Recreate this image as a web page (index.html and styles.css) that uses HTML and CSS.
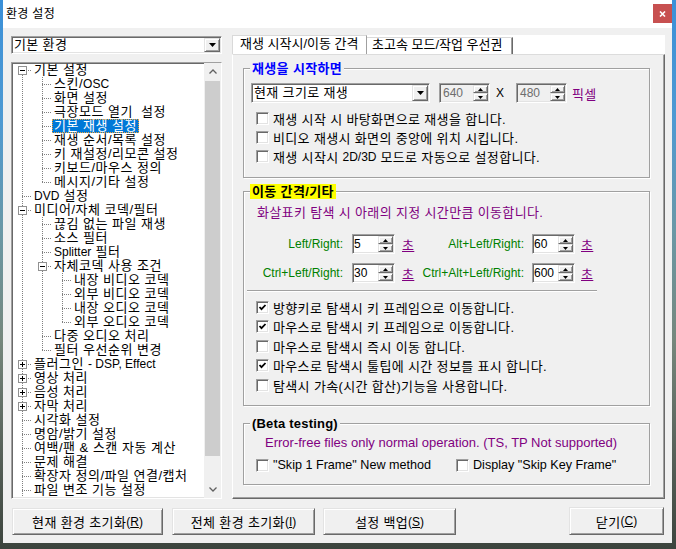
FILE: index.html
```html
<!DOCTYPE html>
<html lang="ko">
<head>
<meta charset="utf-8">
<title>환경 설정</title>
<link rel="stylesheet" href="styles.css">
</head>
<body>
<div class="window">
  <div class="titlebar">
    <span class="title">환경 설정</span>
    <span class="close"><svg width="7" height="6" viewBox="0 0 7 6"><path d="M1 0.5 L6 5.5 M6 0.5 L1 5.5" stroke="#fff" stroke-width="1.6" fill="none"/></svg></span>
  </div>
  <div class="client">
    <div class="main">
      <div class="left">
        <div class="combo combo-top">
          <span class="combo-text">기본 환경</span>
          <span class="drop raised"><svg width="7" height="4" viewBox="0 0 7 4"><polygon points="0,0 7,0 3.5,4" fill="#000"/></svg></span>
        </div>
        <div class="tree">
          <div class="tree-list">
            <div class="row"><span class="c fb"><i class="box minus"></i></span><span class="lbl">기본 설정</span></div>
            <div class="row"><span class="c v"></span><span class="c t"></span><span class="lbl">스킨/<span class="en">OSC</span></span></div>
            <div class="row"><span class="c v"></span><span class="c t"></span><span class="lbl">화면 설정</span></div>
            <div class="row"><span class="c v"></span><span class="c t"></span><span class="lbl">극장모드 열기  설정</span></div>
            <div class="row"><span class="c v"></span><span class="c t"></span><span class="lbl sel">기본 재생 설정</span></div>
            <div class="row"><span class="c v"></span><span class="c t"></span><span class="lbl">재생 순서/목록 설정</span></div>
            <div class="row"><span class="c v"></span><span class="c t"></span><span class="lbl">키 재설정/리모콘 설정</span></div>
            <div class="row"><span class="c v"></span><span class="c t"></span><span class="lbl">키보드/마우스 정의</span></div>
            <div class="row"><span class="c v"></span><span class="c l"></span><span class="lbl">메시지/기타 설정</span></div>
            <div class="row"><span class="c t"></span><span class="lbl"><span class="en">DVD</span> 설정</span></div>
            <div class="row"><span class="c t"><i class="box minus"></i></span><span class="lbl">미디어/자체 코덱/필터</span></div>
            <div class="row"><span class="c v"></span><span class="c t"></span><span class="lbl">끊김 없는 파일 재생</span></div>
            <div class="row"><span class="c v"></span><span class="c t"></span><span class="lbl">소스 필터</span></div>
            <div class="row"><span class="c v"></span><span class="c t"></span><span class="lbl"><span class="en">Splitter</span> 필터</span></div>
            <div class="row"><span class="c v"></span><span class="c t"><i class="box minus"></i></span><span class="lbl">자체코덱 사용 조건</span></div>
            <div class="row"><span class="c v"></span><span class="c v"></span><span class="c t"></span><span class="lbl">내장 비디오 코덱</span></div>
            <div class="row"><span class="c v"></span><span class="c v"></span><span class="c t"></span><span class="lbl">외부 비디오 코덱</span></div>
            <div class="row"><span class="c v"></span><span class="c v"></span><span class="c t"></span><span class="lbl">내장 오디오 코덱</span></div>
            <div class="row"><span class="c v"></span><span class="c v"></span><span class="c l"></span><span class="lbl">외부 오디오 코덱</span></div>
            <div class="row"><span class="c v"></span><span class="c t"></span><span class="lbl">다중 오디오 처리</span></div>
            <div class="row"><span class="c v"></span><span class="c l"></span><span class="lbl">필터 우선순위 변경</span></div>
            <div class="row"><span class="c t"><i class="box plus"></i></span><span class="lbl">플러그인 <span class="en">- DSP, Effect</span></span></div>
            <div class="row"><span class="c t"><i class="box plus"></i></span><span class="lbl">영상 처리</span></div>
            <div class="row"><span class="c t"><i class="box plus"></i></span><span class="lbl">음성 처리</span></div>
            <div class="row"><span class="c t"><i class="box plus"></i></span><span class="lbl">자막 처리</span></div>
            <div class="row"><span class="c t"></span><span class="lbl">시각화 설정</span></div>
            <div class="row"><span class="c t"></span><span class="lbl">명암/밝기 설정</span></div>
            <div class="row"><span class="c t"></span><span class="lbl">여백/팬 &amp; 스캔 자동 계산</span></div>
            <div class="row"><span class="c t"></span><span class="lbl">문제 해결</span></div>
            <div class="row"><span class="c t"></span><span class="lbl">확장자 정의/파일 연결/캡처</span></div>
            <div class="row"><span class="c t"></span><span class="lbl">파일 변조 기능 설정</span></div>
          </div>
          <div class="vscroll">
            <span class="sb-btn"><svg width="8" height="5" viewBox="0 0 8 5"><polyline points="0.5,4.5 4,1 7.5,4.5" fill="none" stroke="#606060" stroke-width="1.3"/></svg></span>
            <span class="sb-thumb"></span>
            <span class="sb-track"></span>
            <span class="sb-btn"><svg width="8" height="5" viewBox="0 0 8 5"><polyline points="0.5,0.5 4,4 7.5,0.5" fill="none" stroke="#606060" stroke-width="1.3"/></svg></span>
          </div>
        </div>
      </div>
      <div class="tabctl">
        <div class="tabstrip">
          <div class="tab tab1">재생 시작시/이동 간격</div>
          <div class="tab tab2">초고속 모드/작업 우선권</div>
        </div>
        <div class="page">
          <fieldset class="group g1">
            <legend class="lg-blue">재생을 시작하면</legend>
            <div class="sizerow">
              <div class="combo combo-size">
                <span class="combo-text">현재 크기로 재생</span>
                <span class="drop raised"><svg width="7" height="4" viewBox="0 0 7 4"><polygon points="0,0 7,0 3.5,4" fill="#000"/></svg></span>
              </div>
              <div class="spin spin-size disabled">
                <span class="val">640</span>
                <span class="arrows"><span class="raised"><svg width="5" height="3" viewBox="0 0 5 3"><polygon points="0,3 5,3 2.5,0" fill="#000"/></svg></span><span class="raised"><svg width="5" height="3" viewBox="0 0 5 3"><polygon points="0,0 5,0 2.5,3" fill="#000"/></svg></span></span>
              </div>
              <span class="times">X</span>
              <div class="spin spin-size disabled">
                <span class="val">480</span>
                <span class="arrows"><span class="raised"><svg width="5" height="3" viewBox="0 0 5 3"><polygon points="0,3 5,3 2.5,0" fill="#000"/></svg></span><span class="raised"><svg width="5" height="3" viewBox="0 0 5 3"><polygon points="0,0 5,0 2.5,3" fill="#000"/></svg></span></span>
              </div>
              <span class="purple pixel">픽셀</span>
            </div>
            <div class="cbrows rows19">
              <div class="cbrow"><span class="cb"></span>재생 시작 시 바탕화면으로 재생을 합니다.</div>
              <div class="cbrow"><span class="cb"></span>비디오 재생시 화면의 중앙에 위치 시킵니다.</div>
              <div class="cbrow"><span class="cb"></span>재생 시작시 <span class="en">2D/3D</span> 모드로 자동으로 설정합니다.</div>
            </div>
          </fieldset>

          <fieldset class="group g2">
            <legend class="lg-yellow">이동 간격/기타</legend>
            <div class="purple note">화살표키 탐색 시 아래의 지정 시간만큼 이동합니다.</div>
            <div class="spinrows">
              <div class="spinrow">
                <span class="green lab1">Left/Right:</span>
                <div class="spin spin-sec"><span class="val">5</span><span class="arrows"><span class="raised"><svg width="5" height="3" viewBox="0 0 5 3"><polygon points="0,3 5,3 2.5,0" fill="#000"/></svg></span><span class="raised"><svg width="5" height="3" viewBox="0 0 5 3"><polygon points="0,0 5,0 2.5,3" fill="#000"/></svg></span></span></div>
                <span class="purple unit u1">초</span>
                <span class="green lab2">Alt+Left/Right:</span>
                <div class="spin spin-sec"><span class="val">60</span><span class="arrows"><span class="raised"><svg width="5" height="3" viewBox="0 0 5 3"><polygon points="0,3 5,3 2.5,0" fill="#000"/></svg></span><span class="raised"><svg width="5" height="3" viewBox="0 0 5 3"><polygon points="0,0 5,0 2.5,3" fill="#000"/></svg></span></span></div>
                <span class="purple unit u2">초</span>
              </div>
              <div class="spinrow">
                <span class="green lab1">Ctrl+Left/Right:</span>
                <div class="spin spin-sec"><span class="val">30</span><span class="arrows"><span class="raised"><svg width="5" height="3" viewBox="0 0 5 3"><polygon points="0,3 5,3 2.5,0" fill="#000"/></svg></span><span class="raised"><svg width="5" height="3" viewBox="0 0 5 3"><polygon points="0,0 5,0 2.5,3" fill="#000"/></svg></span></span></div>
                <span class="purple unit u1">초</span>
                <span class="green lab2">Ctrl+Alt+Left/Right:</span>
                <div class="spin spin-sec"><span class="val">600</span><span class="arrows"><span class="raised"><svg width="5" height="3" viewBox="0 0 5 3"><polygon points="0,3 5,3 2.5,0" fill="#000"/></svg></span><span class="raised"><svg width="5" height="3" viewBox="0 0 5 3"><polygon points="0,0 5,0 2.5,3" fill="#000"/></svg></span></span></div>
                <span class="purple unit u2">초</span>
              </div>
            </div>
            <div class="sep"></div>
            <div class="cbrows rows196">
              <div class="cbrow"><span class="cb"><svg width="9" height="9" viewBox="0 0 9 9"><polyline points="1.5,4 3.5,6.2 7.5,2" fill="none" stroke="#000" stroke-width="1.8"/></svg></span>방향키로 탐색시 키 프레임으로 이동합니다.</div>
              <div class="cbrow"><span class="cb"><svg width="9" height="9" viewBox="0 0 9 9"><polyline points="1.5,4 3.5,6.2 7.5,2" fill="none" stroke="#000" stroke-width="1.8"/></svg></span>마우스로 탐색시 키 프레임으로 이동합니다.</div>
              <div class="cbrow"><span class="cb"></span>마우스로 탐색시 즉시 이동 합니다.</div>
              <div class="cbrow"><span class="cb"><svg width="9" height="9" viewBox="0 0 9 9"><polyline points="1.5,4 3.5,6.2 7.5,2" fill="none" stroke="#000" stroke-width="1.8"/></svg></span>마우스로 탐색시 툴팁에 시간 정보를 표시 합니다.</div>
              <div class="cbrow"><span class="cb"></span>탐색시 가속(시간 합산)기능을 사용합니다.</div>
            </div>
          </fieldset>

          <fieldset class="group g3">
            <legend class="lg-black"><span class="en">(Beta testing)</span></legend>
            <div class="purple note3">Error-free files only normal operation. (TS, TP Not supported)</div>
            <div class="cbrow betarow">
              <span class="betaitem"><span class="cb"></span>"Skip 1 Frame" New method</span>
              <span class="betaitem"><span class="cb"></span>Display "Skip Key Frame"</span>
            </div>
          </fieldset>
        </div>
      </div>
    </div>
    <div class="buttons">
      <span class="btn raised b1">현재 환경 초기화<span class="en">(<u>R</u>)</span></span>
      <span class="btn raised b2">전체 환경 초기화<span class="en">(<u>I</u>)</span></span>
      <span class="btn raised b3">설정 백업<span class="en">(<u>S</u>)</span></span>
      <span class="btn raised b4">닫기<span class="en">(<u>C</u>)</span></span>
    </div>
  </div>
</div>
</body>
</html>
```

FILE: styles.css
```css
* { box-sizing: border-box; }
html, body { margin: 0; padding: 0; }
body {
  width: 676px;
  height: 549px;
  overflow: hidden;
  font-family: "Liberation Sans", "Noto Sans CJK KR", sans-serif;
  font-size: 13px;
  letter-spacing: 0.35px;
  color: #000;
  background: linear-gradient(180deg, #3b90d8 0%, #4f9ad2 22%, #6a98a6 42%, #76877c 62%, #58625a 82%, #3c443d 100%);
}
.en { font-size: 12px; letter-spacing: 0; }

.window {
  margin-left: 3px;
  width: 669px;
  height: 543px;
  background: #f0f0f0;
  display: flex;
  flex-direction: column;
}

.titlebar {
  height: 28px;
  flex: none;
  background: #fff;
  display: flex;
  align-items: flex-start;
}
.title { line-height: 28px; padding-left: 3px; font-size: 12px; letter-spacing: 0.3px; }
.close {
  margin-left: auto;
  margin-top: 4px;
  width: 19px;
  height: 19px;
  background: #c75050;
  display: flex;
  align-items: center;
  justify-content: center;
}

.client { padding: 7px 7px 0 8px; }
.main { display: flex; gap: 10px; height: 464px; }
.left { width: 211px; flex: none; display: flex; flex-direction: column; }

/* 3D styles */
.raised {
  background: #f0f0f0;
  border: 1px solid;
  border-color: #e3e3e3 #696969 #696969 #e3e3e3;
  box-shadow: inset 1px 1px #fff, inset -1px -1px #a0a0a0;
}

.combo {
  display: flex;
  background: #fff;
  border: 1px solid;
  border-color: #a0a0a0 #fff #fff #a0a0a0;
  box-shadow: inset 1px 1px #696969, inset -1px -1px #e3e3e3;
  padding: 1px;
}
.combo-text { flex: 1; padding-left: 1px; white-space: nowrap; }
.drop {
  width: 16px;
  flex: none;
  display: flex;
  align-items: center;
  justify-content: center;
}
.combo-top { margin-top: 1px; height: 18px; }
.combo-top .combo-text { line-height: 14px; }
.combo-size { width: 179px; height: 20px; }
.combo-size .combo-text { line-height: 16px; }

/* tree */
.tree {
  margin-top: 8px;
  height: 437px;
  display: flex;
  background: #fff;
  border: 1px solid;
  border-color: #a0a0a0 #fff #fff #a0a0a0;
  box-shadow: inset 1px 1px #696969, inset -1px -1px #e3e3e3;
}
.tree-list { flex: 1; overflow: hidden; letter-spacing: 0.5px; }
.row { display: flex; height: 14px; white-space: nowrap; }
.c {
  width: 20px;
  height: 14px;
  flex: none;
  display: flex;
  align-items: flex-start;
  background-repeat: no-repeat;
}
.c.v {
  background-image: repeating-linear-gradient(to bottom, #808080 0 1px, transparent 1px 2px);
  background-position: 10px 0;
  background-size: 1px 14px;
}
.c.t {
  background-image: repeating-linear-gradient(to bottom, #808080 0 1px, transparent 1px 2px),
                    repeating-linear-gradient(to right, #808080 0 1px, transparent 1px 2px);
  background-position: 10px 0, 10px 7px;
  background-size: 1px 14px, 10px 1px;
}
.c.l {
  background-image: repeating-linear-gradient(to bottom, #808080 0 1px, transparent 1px 2px),
                    repeating-linear-gradient(to right, #808080 0 1px, transparent 1px 2px);
  background-position: 10px 0, 10px 7px;
  background-size: 1px 8px, 10px 1px;
}
.c.fb {
  background-image: repeating-linear-gradient(to bottom, #808080 0 1px, transparent 1px 2px),
                    repeating-linear-gradient(to right, #808080 0 1px, transparent 1px 2px);
  background-position: 10px 8px, 10px 7px;
  background-size: 1px 6px, 10px 1px;
}
.box {
  display: block;
  width: 9px;
  height: 9px;
  margin: 3px 0 0 6px;
  border: 1px solid #919191;
  background-color: #fff;
  background-repeat: no-repeat;
}
.box.minus {
  background-image: linear-gradient(#000, #000);
  background-position: 1px 3px;
  background-size: 5px 1px;
}
.box.plus {
  background-image: linear-gradient(#000, #000), linear-gradient(#000, #000);
  background-position: 1px 3px, 3px 1px;
  background-size: 5px 1px, 1px 5px;
}
.lbl {
  padding: 0 2px;
  height: 14px;
  line-height: 14px;
  white-space: pre;
}
.lbl.sel {
  background: #0078d7;
  color: #fff;
  outline: 1px dotted #f2a53c;
  outline-offset: -1px;
}

.vscroll {
  width: 17px;
  flex: none;
  display: flex;
  flex-direction: column;
  background: #f0f0f0;
}
.sb-btn {
  height: 17px;
  flex: none;
  display: flex;
  align-items: center;
  justify-content: center;
}
.sb-thumb { margin: 1px 1px 0; height: 375px; flex: none; background: #cdcdcd; }
.sb-track { flex: 1; }

/* tabs */
.tabctl { width: 433px; flex: none; display: flex; flex-direction: column; }
.tabstrip {
  height: 19px;
  flex: none;
  background: #fff;
  display: flex;
  align-items: flex-end;
}
.tab { white-space: nowrap; background: #fff; letter-spacing: 0; }
.tab1 {
  width: 135px;
  height: 19px;
  padding-left: 7px;
  line-height: 16px;
  border: 1px solid #d9d9d9;
  border-bottom: none;
  border-right-color: #a0a0a0;
}
.tab2 {
  width: 146px;
  height: 17px;
  padding-left: 5px;
  line-height: 14px;
  border-top: 1px solid #d9d9d9;
  border-right: 1px solid #696969;
  box-shadow: inset -1px 0 #a0a0a0;
}
.page {
  height: 445px;
  flex: none;
  background: #f0f0f0;
  border: 1px solid;
  border-color: #dcdcdc #696969 #696969 #fff;
  box-shadow: inset -1px -1px #a0a0a0;
  display: flex;
  flex-direction: column;
}

/* group boxes */
.group {
  margin: 0 14px 0 10px;
  padding: 0;
  min-width: 0;
  border: 1px solid #a0a0a0;
  box-shadow: inset 1px 1px #fff, 1px 1px #fff;
}
.group legend {
  margin-left: 6px;
  padding: 0 2px;
  line-height: 15px;
  height: 15px;
  font-weight: bold;
  background: #f0f0f0;
  white-space: nowrap;
}
.lg-blue { color: #0000ff; }
.lg-yellow { background: #ffff00 !important; color: #000; }
.lg-black { color: #000; }
.lg-black .en { font-size: 13px; letter-spacing: 0.2px; }

.g1 { margin-top: 6px; padding-bottom: 11px; }
.g2 { margin-top: 6px; padding-bottom: 9.6px; }
.g3 { margin-top: 10px; padding-bottom: 9px; }

.purple { color: #800080; }
.green { color: #008000; }

.sizerow {
  margin-top: 7px;
  padding-left: 7px;
  display: flex;
  align-items: center;
  height: 20px;
}
.spin {
  display: flex;
  height: 20px;
  flex: none;
  background: #fff;
  border: 1px solid;
  border-color: #a0a0a0 #fff #fff #a0a0a0;
  box-shadow: inset 1px 1px #696969, inset -1px -1px #e3e3e3;
  padding: 1px;
}
.spin .val { flex: 1; line-height: 16px; white-space: nowrap; font-size: 12px; letter-spacing: 0; }
.spin .arrows { width: 15px; flex: none; display: flex; flex-direction: column; }
.spin .arrows span {
  flex: 1;
  display: flex;
  align-items: center;
  justify-content: center;
}
.spin.disabled { background: #f0f0f0; color: #6d6d6d; }
.spin-size { width: 51px; margin-left: 9px; }
.spin-size .val { padding-left: 2px; }
.times { margin: 0 3px 0 6px; width: 8px; font-size: 12px; letter-spacing: 0; }
.pixel { margin-left: 5px; }

.cbrows { display: flex; flex-direction: column; }
.cbrow {
  display: flex;
  align-items: center;
  padding-left: 12px;
  white-space: pre;
}
.rows19 { margin-top: 6px; }
.rows19 .cbrow { height: 19px; }
.rows196 { margin-top: 5.4px; }
.rows196 .cbrow { height: 19.6px; }
.cb {
  width: 13px;
  height: 13px;
  flex: none;
  margin-right: 4px;
  background: #fff;
  border: 1px solid;
  border-color: #a0a0a0 #fff #fff #a0a0a0;
  box-shadow: inset 1px 1px #696969, inset -1px -1px #e3e3e3;
  display: flex;
  align-items: center;
  justify-content: center;
}

.note {
  margin-top: 7px;
  padding-left: 13px;
  line-height: 14px;
  height: 14px;
  white-space: nowrap;
}
.spinrows {
  margin-top: 14px;
  display: flex;
  flex-direction: column;
  gap: 9px;
}
.spinrow { display: flex; align-items: center; height: 20px; white-space: nowrap; }
.lab1, .lab2 { font-size: 12px; letter-spacing: 0; }
.lab1 { width: 99px; text-align: right; margin-right: 9px; }
.lab2 { width: 110px; text-align: right; margin-right: 8px; }
.spin-sec { width: 43px; }
.unit { text-decoration: underline; width: 12px; }
.u1 { margin-left: 7px; }
.u2 { margin-left: 6px; }

.sep {
  margin: 7px 0 0 3px;
  width: 350px;
  height: 2px;
  border-top: 1px solid #a0a0a0;
  border-bottom: 1px solid #fff;
}

.note3 {
  margin-top: 5px;
  padding-left: 21px;
  line-height: 14px;
  height: 14px;
  white-space: nowrap;
  font-size: 13px;
  letter-spacing: 0;
}
.betarow { margin-top: 6px; height: 19px; font-size: 12.6px; letter-spacing: 0; }
.betaitem { display: flex; align-items: center; }
.betaitem:first-child { width: 200px; }

/* bottom buttons */
.buttons {
  display: flex;
  align-items: flex-end;
  height: 36px;
  padding: 0 1px;
}
.btn {
  height: 27px;
  display: flex;
  align-items: center;
  justify-content: center;
  white-space: nowrap;
}
.b1 { width: 151px; }
.b2 { width: 143px; margin-left: 9px; }
.b3 { width: 133px; margin-left: 8px; }
.b4 { width: 95px; height: 28px; margin-left: auto; }
```
